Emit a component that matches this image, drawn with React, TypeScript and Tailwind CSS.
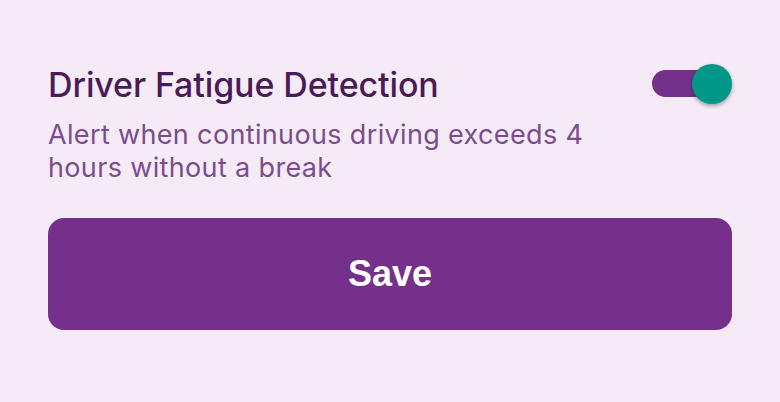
import React from "react";

export default function App() {
  return (
    <div
      className="w-[780px] h-[402px] bg-[#f4ebf7] px-12 pt-[65px]"
      style={{ fontFamily: "Inter, 'Noto Sans', sans-serif" }}
    >
      <div className="flex items-start justify-between">
        <div className="flex flex-col">
          <div className="text-[34px] leading-[40px] font-medium text-[#4a1b57] tracking-[-0.12px]">
            Driver Fatigue Detection
          </div>
          <div className="mt-[13px] w-[590px] text-[27px] leading-[33px] tracking-[0.35px] text-[#7d4b8e]">
            Alert when continuous driving exceeds 4 hours without a break
          </div>
        </div>
        <div className="relative mt-[5px] h-[27px] w-[80px]">
          <div className="absolute left-0 top-0 h-[27px] w-[68px] rounded-full bg-[#74308a]" />
          <div className="absolute right-0 top-[-6px] h-[40px] w-[40px] rounded-full bg-[#009688] shadow-[0_2px_4px_rgba(0,0,0,0.35)]" />
        </div>
      </div>
      <button
        className="mt-[34px] flex h-[112px] w-full items-center justify-center rounded-[16px] bg-[#74308a] text-[36px] font-bold text-white"
        style={{ fontFamily: "'Liberation Sans', Arial, sans-serif" }}
      >
        Save
      </button>
    </div>
  );
}
